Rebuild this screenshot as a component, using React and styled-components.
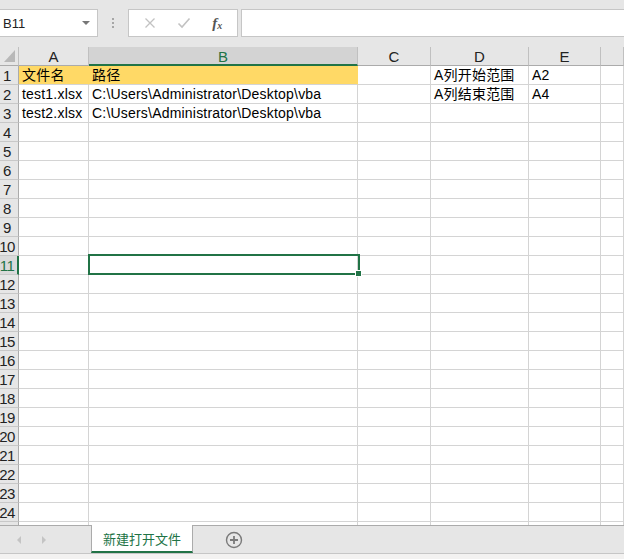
import React from 'react';
import styled, { createGlobalStyle } from 'styled-components';

const GlobalStyle = createGlobalStyle`
  html, body {
    margin: 0;
    padding: 0;
    overflow: hidden;
  }
  body {
    font-family: "Liberation Sans", "Noto Sans CJK SC", sans-serif;
    background: #e6e6e6;
  }
  * {
    box-sizing: border-box;
  }
`;

const COLS = [70, 269, 73, 98, 72];
const COL_NAMES = ['A', 'B', 'C', 'D', 'E', ''];
const ROW_COUNT = 25;

const cells = {
  '1-0': '文件名',
  '1-1': '路径',
  '2-0': 'test1.xlsx',
  '2-1': 'C:\\Users\\Administrator\\Desktop\\vba',
  '3-0': 'test2.xlsx',
  '3-1': 'C:\\Users\\Administrator\\Desktop\\vba',
  '1-3': 'A列开始范围',
  '1-4': 'A2',
  '2-3': 'A列结束范围',
  '2-4': 'A4',
};

const Window = styled.div`
  width: 624px;
  height: 559px;
  display: flex;
  flex-direction: column;
  background: #e6e6e6;
  overflow: hidden;
`;

const FormulaBar = styled.div`
  height: 47px;
  display: flex;
  align-items: flex-start;
  padding-top: 9px;
`;

const NameBox = styled.div`
  width: 98px;
  height: 28px;
  background: #fff;
  border: 1px solid #c6c6c6;
  border-left: none;
  display: flex;
  align-items: center;
  justify-content: space-between;
  padding: 0 7px 0 3px;
  font-size: 13px;
  color: #222;
`;

const DropArrow = styled.span`
  width: 0;
  height: 0;
  border-left: 4px solid transparent;
  border-right: 4px solid transparent;
  border-top: 4px solid #777;
`;

const Dots = styled.div`
  width: 30px;
  height: 28px;
  display: flex;
  flex-direction: column;
  align-items: center;
  justify-content: center;
  gap: 2px;
  span {
    width: 2px;
    height: 2px;
    background: #a6a6a6;
  }
`;

const FxButtons = styled.div`
  width: 110px;
  height: 28px;
  background: #fff;
  border: 1px solid #c6c6c6;
  display: flex;
  align-items: center;
  justify-content: space-around;
  padding: 0 4px;
`;

const FxLabel = styled.span`
  font-family: "Liberation Serif", serif;
  font-style: italic;
  font-weight: bold;
  font-size: 15px;
  color: #555;
  sub {
    font-size: 10px;
    vertical-align: -1px;
  }
`;

const FormulaInput = styled.div`
  flex: 1;
  height: 28px;
  margin-left: 3px;
  background: #fff;
  border: 1px solid #c6c6c6;
  border-right: none;
`;

const Sheet = styled.div`
  flex: 1;
  overflow: hidden;
  background: #fff;
`;

const Grid = styled.div`
  display: grid;
  grid-template-columns: 19px ${COLS.map((w) => `${w}px`).join(' ')} 1fr;
  grid-auto-rows: 19px;
`;

const Corner = styled.div`
  background: #e6e6e6;
  border-right: 1px solid #c0c0c0;
  border-bottom: 1px solid #ababab;
  position: relative;
  &::after {
    content: '';
    position: absolute;
    right: 3px;
    bottom: 3px;
    width: 0;
    height: 0;
    border-left: 11px solid transparent;
    border-bottom: 12px solid #b8b8b8;
  }
`;

const ColHead = styled.div`
  background: ${(p) => (p.$active ? '#d3d3d3' : '#e6e6e6')};
  color: ${(p) => (p.$active ? '#217346' : '#222')};
  border-right: 1px solid #c0c0c0;
  border-bottom: ${(p) => (p.$active ? '2px solid #217346' : '1px solid #ababab')};
  font-size: 15px;
  line-height: 19px;
  text-align: center;
`;

const RowHead = styled.div`
  background: ${(p) => (p.$active ? '#dadada' : '#e6e6e6')};
  color: ${(p) => (p.$active ? '#217346' : '#222')};
  border-right: ${(p) => (p.$active ? '2px solid #217346' : '1px solid #ababab')};
  border-bottom: 1px solid #c8c8c8;
  font-size: 15px;
  line-height: 19px;
  display: flex;
  justify-content: center;
  padding-right: ${(p) => (p.$active ? '3px' : '4px')};
  letter-spacing: -0.5px;
  white-space: nowrap;
`;

const Cell = styled.div`
  position: relative;
  background: ${(p) => (p.$fill ? '#ffd966' : '#fff')};
  border-right: 1px solid ${(p) => (p.$fill ? '#ffd966' : '#d4d4d4')};
  border-bottom: 1px solid #d4d4d4;
  font-size: 14px;
  line-height: 19px;
  padding-left: 3px;
  letter-spacing: 0.2px;
  color: #000;
  white-space: nowrap;
  overflow: visible;
  z-index: ${(p) => (p.$selected ? 2 : 'auto')};
`;

const Selection = styled.div`
  position: absolute;
  left: -1px;
  top: -2px;
  width: 272px;
  height: 21px;
  border: 2px solid #217346;
  pointer-events: none;
  &::after {
    content: '';
    position: absolute;
    right: -4px;
    bottom: -4px;
    width: 5px;
    height: 5px;
    background: #217346;
    border: 1px solid #fff;
  }
`;

const TabBar = styled.div`
  height: 28px;
  display: flex;
  align-items: stretch;
  background: #e6e6e6;
  border-top: 1px solid #ababab;
`;

const NavArea = styled.div`
  width: 91px;
  display: flex;
  align-items: center;
  gap: 21px;
  padding-left: 17px;
`;

const NavArrow = styled.span`
  width: 0;
  height: 0;
  border-top: 4px solid transparent;
  border-bottom: 4px solid transparent;
  ${(p) => (p.$dir === 'left' ? 'border-right: 4px solid #c4c4c4;' : 'border-left: 4px solid #c4c4c4;')}
`;

const Tab = styled.div`
  width: 102px;
  margin-top: -1px;
  background: #fff;
  border-left: 1px solid #ababab;
  border-right: 1px solid #ababab;
  border-bottom: 2px solid #217346;
  color: #217346;
  font-family: "Noto Sans CJK SC", sans-serif;
  font-size: 13px;
  display: flex;
  align-items: center;
  justify-content: center;
`;

const AddSheet = styled.div`
  width: 82px;
  display: flex;
  align-items: center;
  justify-content: center;
`;

const StatusStrip = styled.div`
  height: 6px;
  background: #f3f2f1;
  border-top: 1px solid #c6c6c6;
`;

export default function App() {
  const selRow = 11;
  const selCol = 1;
  const rows = [];
  for (let r = 1; r <= ROW_COUNT; r++) {
    rows.push(
      <RowHead key={`h${r}`} $active={r === selRow}>{r}</RowHead>
    );
    for (let c = 0; c < COL_NAMES.length; c++) {
      const selected = r === selRow && c === selCol;
      rows.push(
        <Cell key={`${r}-${c}`} $fill={r === 1 && c < 2} $selected={selected}>
          {cells[`${r}-${c}`]}
          {selected && <Selection />}
        </Cell>
      );
    }
  }

  return (
    <>
      <GlobalStyle />
      <Window>
        <FormulaBar>
          <NameBox>
            <span>B11</span>
            <DropArrow />
          </NameBox>
          <Dots>
            <span />
            <span />
            <span />
          </Dots>
          <FxButtons>
            <svg width="12" height="12" viewBox="0 0 12 12">
              <path d="M1.5 1.5 L10.5 10.5 M10.5 1.5 L1.5 10.5" stroke="#c2c2c2" strokeWidth="1.3" fill="none" />
            </svg>
            <svg width="14" height="12" viewBox="0 0 14 12">
              <path d="M1.5 6.5 L5 10 L12.5 1.5" stroke="#c2c2c2" strokeWidth="1.6" fill="none" />
            </svg>
            <FxLabel>f<sub>x</sub></FxLabel>
          </FxButtons>
          <FormulaInput />
        </FormulaBar>

        <Sheet>
          <Grid>
            <Corner />
            {COL_NAMES.map((name, i) => (
              <ColHead key={i} $active={i === selCol}>{name}</ColHead>
            ))}
            {rows}
          </Grid>
        </Sheet>

        <TabBar>
          <NavArea>
            <NavArrow $dir="left" />
            <NavArrow $dir="right" />
          </NavArea>
          <Tab>新建打开文件</Tab>
          <AddSheet>
            <svg width="18" height="18" viewBox="0 0 18 18">
              <circle cx="9" cy="9" r="7.5" stroke="#7a7a7a" strokeWidth="1.4" fill="none" />
              <path d="M9 5 V13 M5 9 H13" stroke="#7a7a7a" strokeWidth="1.8" />
            </svg>
          </AddSheet>
        </TabBar>
        <StatusStrip />
      </Window>
    </>
  );
}
